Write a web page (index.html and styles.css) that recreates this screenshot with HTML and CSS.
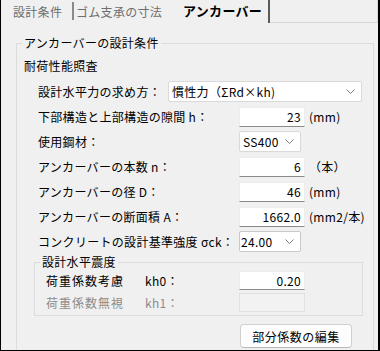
FILE: index.html
```html
<!DOCTYPE html>
<html lang="ja">
  <head>
    <meta charset="UTF-8" />
    <meta name="viewport" content="width=device-width, initial-scale=1.0" />
    <title>アンカーバー</title>
    <link rel="stylesheet" href="styles.css">
  </head>
  <body>
    <div class="window">
      <!-- タブ -->
      <div class="tabs">
        <div class="tab tab-first">設計条件</div>
        <div class="tab tab-second">ゴム支承の寸法</div>
        <div class="tab tab-active">アンカーバー</div>
        <div class="tab-rest"></div>
      </div>

      <div class="panel">
        <fieldset class="group group-main">
          <legend>アンカーバーの設計条件</legend>
          <div class="heading">耐荷性能照査</div>

          <div class="row">
            <span class="label label-method">設計水平力の求め方：</span>
            <div class="select select-method">
              <span>慣性力（ΣRd×kh)</span>
              <svg class="chev" width="9" height="6" viewBox="0 0 9 6"><polyline points="0.5,0.5 4.5,4.5 8.5,0.5" /></svg>
            </div>
          </div>

          <div class="row">
            <span class="label">下部構造と上部構造の隙間 h：</span>
            <div class="input">23</div>
            <span class="unit">(mm)</span>
          </div>

          <div class="row">
            <span class="label">使用鋼材：</span>
            <div class="select select-small">
              <span>SS400</span>
              <svg class="chev" width="9" height="6" viewBox="0 0 9 6"><polyline points="0.5,0.5 4.5,4.5 8.5,0.5" /></svg>
            </div>
          </div>

          <div class="row">
            <span class="label">アンカーバーの本数 n：</span>
            <div class="input">6</div>
            <span class="unit">（本）</span>
          </div>

          <div class="row">
            <span class="label">アンカーバーの径 D：</span>
            <div class="input">46</div>
            <span class="unit">(mm)</span>
          </div>

          <div class="row">
            <span class="label">アンカーバーの断面積 A：</span>
            <div class="input">1662.0</div>
            <span class="unit">(mm2/本)</span>
          </div>

          <div class="row">
            <span class="label">コンクリートの設計基準強度 σck：</span>
            <div class="select select-small select-flat">
              <span>24.00</span>
              <svg class="chev" width="9" height="6" viewBox="0 0 9 6"><polyline points="0.5,0.5 4.5,4.5 8.5,0.5" /></svg>
            </div>
          </div>

          <fieldset class="group group-sub">
            <legend>設計水平震度</legend>
            <div class="row row-sub">
              <span class="sub-name">荷重係数考慮</span>
              <span class="sub-key">kh0：</span>
              <div class="input">0.20</div>
            </div>
            <div class="row row-sub disabled">
              <span class="sub-name">荷重係数無視</span>
              <span class="sub-key">kh1：</span>
              <div class="input input-off"></div>
            </div>
          </fieldset>

          <button class="btn">部分係数の編集</button>
        </fieldset>
      </div>
    </div>
  </body>
</html>
```

FILE: styles.css
```css
html,
body {
  margin: 0;
  padding: 0;
  background: #f0f0f0;
}

body {
  font-family: "Noto Sans CJK JP", "Noto Sans", sans-serif;
  font-size: 12px;
  color: #000;
  letter-spacing: 0.3px;
}

.window {
  width: 380px;
  height: 351px;
  box-sizing: border-box;
  border-left: 1px solid #000;
  border-right: 2px solid #000;
  border-bottom: 1px solid #000;
  overflow: hidden;
  background: #f0f0f0;
}

/* Tabs */
.tabs {
  display: flex;
  align-items: flex-start;
  height: 23px;
}

.tab {
  white-space: nowrap;
  box-sizing: border-box;
}

.tab-first {
  width: 73px;
  height: 18px;
  margin-top: 2px;
  padding-left: 12px;
  line-height: 19px;
  color: #6d6d6d;
  border-right: 2px solid #8a8a8a;
}

.tab-second {
  width: 98px;
  height: 23px;
  padding-left: 2px;
  padding-top: 2px;
  line-height: 19px;
  color: #6d6d6d;
}

.tab-active {
  width: 98px;
  height: 23px;
  padding-left: 11px;
  line-height: 22px;
  font-size: 13px;
  font-weight: bold;
  border-right: 2px solid #5a5a5a;
}

.tab-rest {
  flex: 1;
  height: 23px;
  box-sizing: border-box;
  border-bottom: 1px solid #d9d9d9;
  border-right: 1px solid #d9d9d9;
}

/* Panel */
.panel {
  padding-left: 15px;
}

.group {
  margin: 0;
  box-sizing: border-box;
  border: 1px solid #dcdcdc;
  min-width: 0;
}

.group legend {
  line-height: 14px;
  padding: 0 2px;
}

.group-main {
  width: 358px;
  margin-top: 13px;
  padding: 8px 0 30px 7px;
}

.group-main > legend {
  margin-left: -2px;
}

.heading {
  line-height: 16px;
  margin-bottom: 7px;
}

.row {
  display: flex;
  align-items: center;
  height: 21px;
  margin-left: 14px;
  white-space: nowrap;
}

.row + .row {
  margin-top: 4px;
}

.label {
  width: 201px;
  flex: none;
}

.label-method {
  width: 130px;
}

/* Fields */
.input {
  width: 66px;
  height: 20px;
  box-sizing: border-box;
  background: #fff;
  border: 1px solid #ececec;
  border-bottom-color: #8a8a8a;
  text-align: right;
  padding-right: 3px;
  line-height: 18px;
}

.input-off {
  background: #f2f2f2;
  border-color: #e1e1e1;
}

.unit {
  margin-left: 4px;
}

.select {
  display: flex;
  align-items: center;
  justify-content: space-between;
  height: 21px;
  box-sizing: border-box;
  background: #fff;
  border: 1px solid #d9d9d9;
  border-radius: 2px;
  padding: 0 6px 0 3px;
  line-height: 19px;
}

.select-method {
  width: 194px;
}

.select-small {
  width: 62px;
}

.select-flat {
  padding-left: 1px;
  border-color: #c9c9c9;
}

.chev {
  fill: none;
  stroke: #7a7a7a;
  stroke-width: 1;
}

/* Sub group */
.group-sub {
  width: 329px;
  margin-top: 3px;
  margin-left: 10px;
  padding: 2px 0 3px 11px;
}

.group-sub > legend {
  margin-left: -6px;
}

.row-sub {
  height: 19px;
  margin-left: 0;
}

.row-sub + .row-sub {
  margin-top: 3px;
}

.row-sub .input {
  height: 19px;
  line-height: 17px;
}

.sub-name {
  width: 99px;
  letter-spacing: 1px;
}

.sub-key {
  width: 94px;
}

.disabled {
  color: #8c8c8c;
}

/* Button */
.btn {
  display: block;
  width: 112px;
  height: 24px;
  margin: 8px 0 0 216px;
  padding: 0;
  font-family: inherit;
  font-size: 12px;
  letter-spacing: 0.5px;
  color: #000;
  background: #fdfdfd;
  border: 1px solid #d0d0d0;
  border-bottom-color: #b8b8b8;
  border-radius: 4px;
}
```
